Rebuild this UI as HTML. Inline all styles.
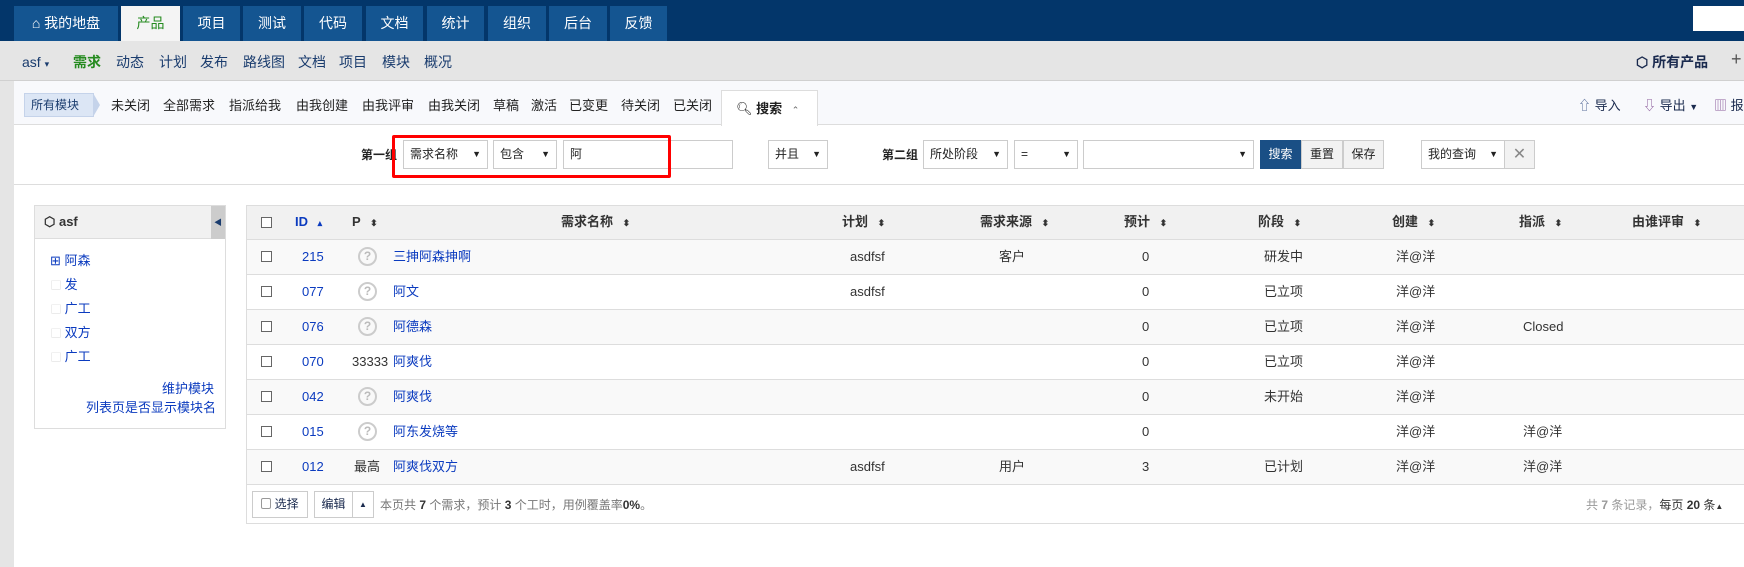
<!DOCTYPE html>
<html><head><meta charset="utf-8">
<style>
*{margin:0;padding:0;box-sizing:border-box}
body{width:1744px;height:567px;overflow:hidden;background:#fff;font-family:"Liberation Sans","Noto Sans CJK SC",sans-serif;font-size:13px;line-height:16px;color:#333;position:relative}
.a{position:absolute;white-space:nowrap}
#top{left:0;top:0;width:1744px;height:41px;background:#03366a}
.tab{position:absolute;top:6px;height:35px;background:#145591;color:#fff;font-size:14px;line-height:35px;text-align:center}
#sub{left:0;top:41px;width:1744px;height:40px;background:#e5e5e5;border-bottom:1px solid #d0d0d0}
.sn{position:absolute;top:53px;font-size:14px;line-height:18px;color:#1a3c6e}
#gl{left:0;top:81px;width:14px;height:486px;background:#e5e5e5}
#fb{left:14px;top:81px;width:1730px;height:44px;background:#f8f9fc;border-bottom:1px solid #ddd}
.fi{position:absolute;top:98px;font-size:13px;color:#222}
.sel{position:absolute;top:140px;height:29px;border:1px solid #ccc;background:#fff;font-size:12px;line-height:27px;padding-left:6px;color:#222}
.sel i{position:absolute;right:6px;top:0;font-style:normal;font-size:9px}
.btn{position:absolute;top:140px;height:29px;border:1px solid #ccc;background:#f2f2f2;font-size:12px;line-height:27px;text-align:center;color:#222}
.row{position:absolute;left:247px;width:1497px;height:35px;border-top:1px solid #ddd}
.c{position:absolute;top:9px;white-space:nowrap;font-size:13px;line-height:16px}
.ck{position:absolute;left:14px;top:11px;width:11px;height:11px;border:1px solid #666;background:#fff}
.q{position:absolute;left:111px;top:7px;width:19px;height:19px;border:2px solid #ccc;border-radius:50%;color:#bbb;font-size:12px;font-weight:bold;line-height:15px;text-align:center}
.lk{color:#0b3bbf}
.h{font-weight:bold;color:#333}
.s{color:#333;font-size:9px;margin-left:6px}
</style></head><body>
<div id="top" class="a"></div>
<div class="tab" style="left:14px;width:104px">⌂ 我的地盘</div>
<div class="tab" style="left:121px;width:59px;background:#f4f4f4;color:#248a1e">产品</div>
<div class="tab" style="left:183px;width:57px">项目</div>
<div class="tab" style="left:243px;width:58px">测试</div>
<div class="tab" style="left:304px;width:58px">代码</div>
<div class="tab" style="left:366px;width:57px">文档</div>
<div class="tab" style="left:427px;width:57px">统计</div>
<div class="tab" style="left:488px;width:58px">组织</div>
<div class="tab" style="left:549px;width:58px">后台</div>
<div class="tab" style="left:610px;width:57px">反馈</div>
<div class="a" style="left:1693px;top:6px;width:51px;height:25px;background:#fff"></div>

<div id="sub" class="a"></div>
<div class="sn" style="left:22px">asf <span style="font-size:9px">▾</span></div>
<div class="sn" style="left:73px;color:#248a1e;font-weight:bold">需求</div>
<div class="sn" style="left:116px">动态</div>
<div class="sn" style="left:159px">计划</div>
<div class="sn" style="left:200px">发布</div>
<div class="sn" style="left:243px">路线图</div>
<div class="sn" style="left:298px">文档</div>
<div class="sn" style="left:339px">项目</div>
<div class="sn" style="left:382px">模块</div>
<div class="sn" style="left:424px">概况</div>
<div class="sn" style="left:1636px;font-weight:bold;color:#1a2a4e">⬡ 所有产品</div>
<div class="sn" style="left:1731px;font-size:18px;top:50px;color:#555">+</div>

<div id="gl" class="a"></div>
<div id="fb" class="a"></div>
<div class="a" style="left:24px;top:93px;width:70px;height:24px;background:#dce6f5;border:1px solid #c5d3ea;color:#1a3c6e;font-size:12px;line-height:22px;padding-left:6px">所有模块</div>
<div class="a" style="left:93px;top:93px;width:0;height:0;border-top:12px solid transparent;border-bottom:12px solid transparent;border-left:7px solid #c5d3ea"></div>
<div class="fi" style="left:111px">未关闭</div>
<div class="fi" style="left:163px">全部需求</div>
<div class="fi" style="left:229px">指派给我</div>
<div class="fi" style="left:296px">由我创建</div>
<div class="fi" style="left:362px">由我评审</div>
<div class="fi" style="left:428px">由我关闭</div>
<div class="fi" style="left:493px">草稿</div>
<div class="fi" style="left:531px">激活</div>
<div class="fi" style="left:569px">已变更</div>
<div class="fi" style="left:621px">待关闭</div>
<div class="fi" style="left:673px">已关闭</div>
<div class="a" style="left:721px;top:90px;width:97px;height:36px;background:#fff;border:1px solid #ddd;border-bottom:none;padding:10px 0 0 14px;font-size:13px;color:#222">🔍︎ <b>搜索</b> <span style="font-size:9px;color:#666;margin-left:6px">⌃</span></div>
<div class="fi" style="left:1578px;color:#1a2a4e"><span style="color:#5a6e9a">⇧</span> 导入</div>
<div class="fi" style="left:1643px;color:#1a2a4e"><span style="color:#8a5a9a">⇩</span> 导出 <span style="font-size:9px">▼</span></div>
<div class="fi" style="left:1714px;color:#1a2a4e"><span style="color:#8a5a9a">▥</span> 报</div>

<div class="a" style="left:14px;top:184px;width:1730px;height:1px;background:#ddd"></div>
<div class="a" style="left:361px;top:147px;font-weight:bold;font-size:12px;color:#222">第一组</div>
<div class="sel" style="left:403px;width:85px">需求名称<i>▼</i></div>
<div class="sel" style="left:493px;width:64px">包含<i>▼</i></div>
<div class="sel" style="left:563px;width:170px">阿</div>
<div class="a" style="left:392px;top:135px;width:279px;height:43px;border:3px solid #f00;border-radius:2px"></div>
<div class="sel" style="left:768px;width:60px">并且<i>▼</i></div>
<div class="a" style="left:882px;top:147px;font-weight:bold;font-size:12px;color:#222">第二组</div>
<div class="sel" style="left:923px;width:85px">所处阶段<i>▼</i></div>
<div class="sel" style="left:1014px;width:64px">=<i>▼</i></div>
<div class="sel" style="left:1083px;width:171px"><i>▼</i></div>
<div class="btn" style="left:1260px;width:41px;background:#1a4f85;border-color:#1a4f85;color:#fff">搜索</div>
<div class="btn" style="left:1301px;width:42px">重置</div>
<div class="btn" style="left:1343px;width:41px">保存</div>
<div class="sel" style="left:1421px;width:84px">我的查询<i>▼</i></div>
<div class="btn" style="left:1504px;width:31px;font-size:16px;color:#888">✕</div>

<div class="a" style="left:34px;top:205px;width:192px;height:224px;border:1px solid #ddd;background:#fff"></div>
<div class="a" style="left:35px;top:206px;width:190px;height:33px;background:#f1f1f1;border-bottom:1px solid #ddd"></div>
<div class="a" style="left:211px;top:206px;width:14px;height:33px;background:#ccc;color:#1a3c6e;font-size:8px;line-height:33px;text-align:center">◀</div>
<div class="a" style="left:44px;top:214px;font-weight:bold;color:#333">⬡ asf</div>
<div class="a lk" style="left:50px;top:253px">⊞ 阿森</div>
<div class="a lk" style="left:51px;top:277px"><span style="color:#ccc;font-size:10px">▢</span> 发</div>
<div class="a lk" style="left:51px;top:301px"><span style="color:#ccc;font-size:10px">▢</span> 广工</div>
<div class="a lk" style="left:51px;top:325px"><span style="color:#ccc;font-size:10px">▢</span> 双方</div>
<div class="a lk" style="left:51px;top:349px"><span style="color:#ccc;font-size:10px">▢</span> 广工</div>
<div class="a lk" style="left:162px;top:381px">维护模块</div>
<div class="a lk" style="left:86px;top:400px">列表页是否显示模块名</div>

<div class="a" style="left:246px;top:205px;width:1498px;height:319px;border:1px solid #ddd;border-right:none"></div>
<div class="row" style="top:206px;background:#f1f1f1;height:33px;border-top:none">
<div class="ck" style="top:11px"></div>
<div class="c lk h" style="left:48px;top:8px;color:#0b3bbf">ID <span class="s" style="color:#0b3bbf">▴</span></div>
<div class="c h" style="left:105px;top:8px">P <span class="s">⬍</span></div>
<div class="c h" style="left:314px;top:8px">需求名称 <span class="s">⬍</span></div>
<div class="c h" style="left:595px;top:8px">计划 <span class="s">⬍</span></div>
<div class="c h" style="left:733px;top:8px">需求来源 <span class="s">⬍</span></div>
<div class="c h" style="left:877px;top:8px">预计 <span class="s">⬍</span></div>
<div class="c h" style="left:1011px;top:8px">阶段 <span class="s">⬍</span></div>
<div class="c h" style="left:1145px;top:8px">创建 <span class="s">⬍</span></div>
<div class="c h" style="left:1272px;top:8px">指派 <span class="s">⬍</span></div>
<div class="c h" style="left:1385px;top:8px">由谁评审 <span class="s">⬍</span></div>
</div>

<div class="row" style="top:239px;background:#f9f9f9"><div class="ck"></div><div class="c lk" style="left:55px">215</div><div class="q">?</div><div class="c lk" style="left:146px">三抻阿森抻啊</div><div class="c" style="left:603px">asdfsf</div><div class="c" style="left:752px">客户</div><div class="c" style="left:895px">0</div><div class="c" style="left:1017px">研发中</div><div class="c" style="left:1149px">洋@洋</div></div>
<div class="row" style="top:274px"><div class="ck"></div><div class="c lk" style="left:55px">077</div><div class="q">?</div><div class="c lk" style="left:146px">阿文</div><div class="c" style="left:603px">asdfsf</div><div class="c" style="left:895px">0</div><div class="c" style="left:1017px">已立项</div><div class="c" style="left:1149px">洋@洋</div></div>
<div class="row" style="top:309px;background:#f9f9f9"><div class="ck"></div><div class="c lk" style="left:55px">076</div><div class="q">?</div><div class="c lk" style="left:146px">阿德森</div><div class="c" style="left:895px">0</div><div class="c" style="left:1017px">已立项</div><div class="c" style="left:1149px">洋@洋</div><div class="c" style="left:1276px">Closed</div></div>
<div class="row" style="top:344px"><div class="ck"></div><div class="c lk" style="left:55px">070</div><div class="c" style="left:105px">33333</div><div class="c lk" style="left:146px">阿爽伐</div><div class="c" style="left:895px">0</div><div class="c" style="left:1017px">已立项</div><div class="c" style="left:1149px">洋@洋</div></div>
<div class="row" style="top:379px;background:#f9f9f9"><div class="ck"></div><div class="c lk" style="left:55px">042</div><div class="q">?</div><div class="c lk" style="left:146px">阿爽伐</div><div class="c" style="left:895px">0</div><div class="c" style="left:1017px">未开始</div><div class="c" style="left:1149px">洋@洋</div></div>
<div class="row" style="top:414px"><div class="ck"></div><div class="c lk" style="left:55px">015</div><div class="q">?</div><div class="c lk" style="left:146px">阿东发烧等</div><div class="c" style="left:895px">0</div><div class="c" style="left:1149px">洋@洋</div><div class="c" style="left:1276px">洋@洋</div></div>
<div class="row" style="top:449px;background:#f9f9f9"><div class="ck"></div><div class="c lk" style="left:55px">012</div><div class="c" style="left:107px">最高</div><div class="c lk" style="left:146px">阿爽伐双方</div><div class="c" style="left:603px">asdfsf</div><div class="c" style="left:752px">用户</div><div class="c" style="left:895px">3</div><div class="c" style="left:1017px">已计划</div><div class="c" style="left:1149px">洋@洋</div><div class="c" style="left:1276px">洋@洋</div></div>
<div class="row" style="top:484px;height:40px;border-bottom:1px solid #ddd"></div>
<div class="btn" style="left:252px;top:491px;width:56px;height:27px;line-height:25px;background:#fff;color:#1a2a4e"><span style="display:inline-block;width:10px;height:11px;border:1px solid #999;border-radius:2px;vertical-align:-1px"></span> 选择</div>
<div class="btn" style="left:314px;top:491px;width:39px;height:27px;line-height:25px;background:#fff;color:#1a2a4e">编辑</div>
<div class="btn" style="left:352px;top:491px;width:22px;height:27px;line-height:25px;background:#fff;font-size:8px;color:#1a2a4e">▲</div>
<div class="a" style="left:380px;top:497px;font-size:12px;color:#777">本页共 <b style="color:#333">7</b> 个需求，预计 <b style="color:#333">3</b> 个工时，用例覆盖率<b style="color:#333">0%</b>。</div>
<div class="a" style="left:1586px;top:497px;font-size:12px;color:#999">共 <b>7</b> 条记录，<span style="color:#333">每页 <b>20</b> 条</span><span style="font-size:8px;color:#333">▲</span></div>
</body></html>
